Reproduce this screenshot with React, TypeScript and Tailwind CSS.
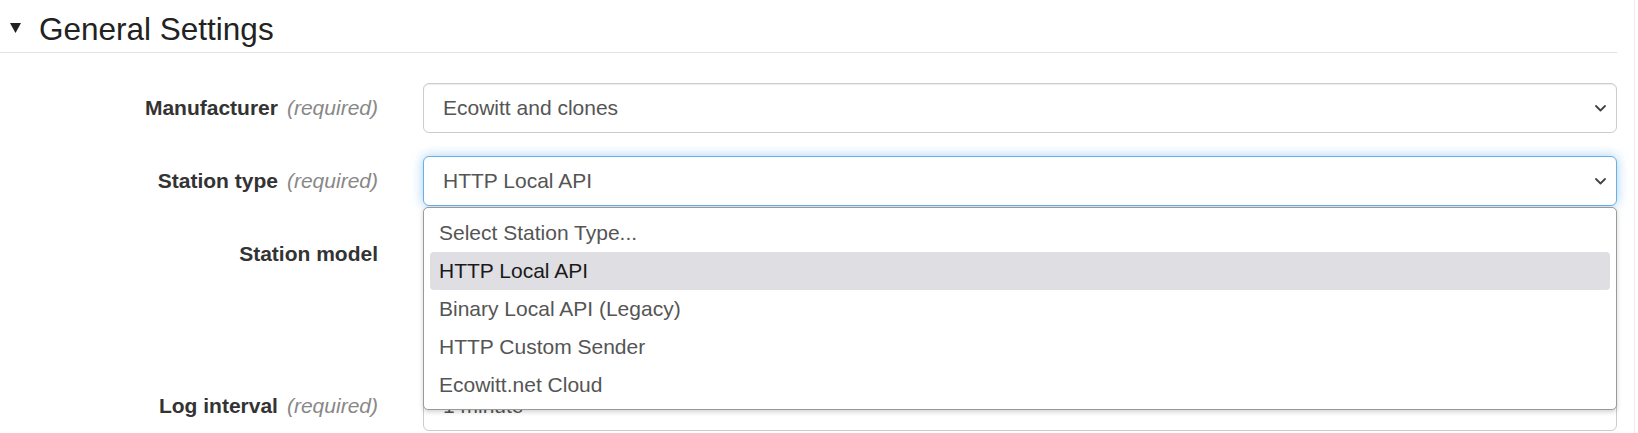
import React from "react";

const Chevron = () => (
  <svg width="11" height="7" viewBox="0 0 11 7" className="shrink-0">
    <path d="M1 1 L5.5 5.5 L10 1" fill="none" stroke="#444" strokeWidth="1.8" strokeLinecap="round" strokeLinejoin="round" />
  </svg>
);

function Label({ text, required }: { text: string; required?: boolean }) {
  return (
    <div className="w-[400px] shrink-0 pr-[22px] flex items-center justify-end h-[50px]">
      <span className="font-bold text-[21px] text-[#333]">{text}</span>
      {required && <span className="italic text-[21px] text-[#888] ml-[9px]">(required)</span>}
    </div>
  );
}

function SelectBox({ value, focused }: { value: string; focused?: boolean }) {
  return (
    <div
      className={
        focused
          ? "ml-[23px] w-[1194px] h-[50px] rounded-[6px] border border-[#66afe9] bg-white flex items-center justify-between pl-[19px] pr-[10px] shadow-[0_0_12px_rgba(102,175,233,0.6)]"
          : "ml-[23px] w-[1194px] h-[50px] rounded-[6px] border border-[#ccc] bg-white flex items-center justify-between pl-[19px] pr-[10px] shadow-[inset_0_1px_1px_rgba(0,0,0,0.075)]"
      }
    >
      <span className="text-[21px] text-[#555]">{value}</span>
      <Chevron />
    </div>
  );
}

export default function App() {
  const options = [
    "Select Station Type...",
    "HTTP Local API",
    "Binary Local API (Legacy)",
    "HTTP Custom Sender",
    "Ecowitt.net Cloud",
  ];
  return (
    <div className="relative w-[1638px] h-[433px] bg-white overflow-hidden font-['Liberation_Sans',Arial,sans-serif]">
      <div className="flex h-full">
        <div className="w-[1634px] h-full">
          <div className="w-[1617px]">
            <div className="mt-[7px] h-[46px] border-b border-[#e3e3e3] flex items-start">
              <svg width="11" height="10" viewBox="0 0 11 10" className="ml-[10px] mt-[16px] shrink-0">
                <path d="M0 0 L11 0 L5.5 10 Z" fill="#222" />
              </svg>
              <span className="ml-[18px] text-[31.5px] leading-[45px] text-[#222]">General Settings</span>
            </div>
            <div className="mt-[30px] flex flex-col">
              <div className="flex">
                <Label text="Manufacturer" required />
                <SelectBox value="Ecowitt and clones" />
              </div>
              <div className="flex mt-[23px]">
                <Label text="Station type" required />
                <SelectBox value="HTTP Local API" focused />
              </div>
              <div className="flex mt-[23px]">
                <Label text="Station model" />
                <SelectBox value="" />
              </div>
              <div className="flex mt-[102px]">
                <Label text="Log interval" required />
                <SelectBox value="1 minute" />
              </div>
            </div>
          </div>
        </div>
        <div className="w-[1px] h-full bg-[#ececec]" />
      </div>

      <div className="absolute left-[423px] top-[207px] w-[1194px] h-[203px] bg-white border border-[#9a9a9a] rounded-[5px] shadow-[0_2px_5px_rgba(0,0,0,0.18)] px-[6px] pt-[6px]">
        {options.map((o, i) => (
          <div
            key={o}
            className={
              i === 1
                ? "h-[38px] flex items-center pl-[9px] rounded-[4px] bg-[#dedee3] text-[21px] text-[#1a1a1a]"
                : "h-[38px] flex items-center pl-[9px] text-[21px] text-[#555]"
            }
          >
            {o}
          </div>
        ))}
      </div>
    </div>
  );
}
